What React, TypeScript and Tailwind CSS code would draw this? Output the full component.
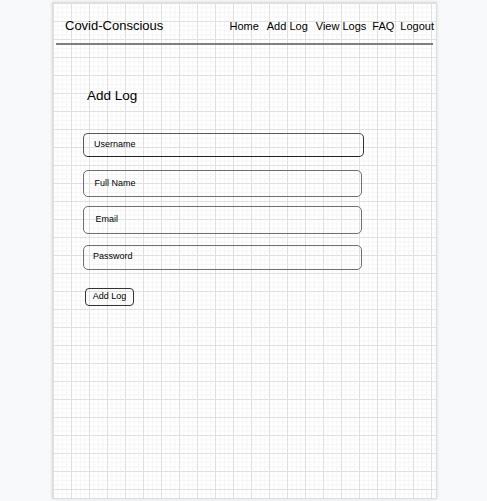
const fields = [
  { label: "Username", box: "mt-[29px] w-[281px] h-[24px] pl-[10px] border border-[#5a5a5a] border-b-[#222] border-r-[#333]" },
  { label: "Full Name", box: "mt-[13px] w-[279px] h-[27px] pl-[10.5px] border-[1.5px] border-[#707070]" },
  { label: "Email", box: "mt-[9px] w-[279px] h-[27.5px] pl-[11.5px] border-[1.5px] border-[#707070]" },
  { label: "Password", box: "mt-[11px] w-[279px] h-[25px] pl-[9px] border-[1.5px] border-[#707070]" },
];

const links = [
  { label: "Home", gap: "" },
  { label: "Add Log", gap: "ml-[8px]" },
  { label: "View Logs", gap: "ml-[8px]" },
  { label: "FAQ", gap: "ml-[6px]" },
  { label: "Logout", gap: "ml-[6px]" },
];

export default function App() {
  return (
    <div className="min-h-screen bg-[#f8f9fa] pl-[52px] pt-[2px] font-['Liberation_Sans',Arial,sans-serif] text-black">
      <div className="w-[385px] h-[497px] border border-[#dedede] bg-white shadow-[0_0_3px_rgba(0,0,0,0.12)] [background-image:linear-gradient(to_right,#e0e0e0_1px,transparent_1px),linear-gradient(to_bottom,#e0e0e0_1px,transparent_1px),linear-gradient(to_right,#f5f5f5_1px,transparent_1px),linear-gradient(to_bottom,#f5f5f5_1px,transparent_1px)] [background-size:18px_18px,18px_18px,4.5px_4.5px,4.5px_4.5px]">
        {/* Header */}
        <header className="flex items-baseline h-[40px] pt-[14.5px] pl-[12px] pr-[2px]">
          <span className="text-[13px] leading-[16px]">Covid-Conscious</span>
          <nav className="ml-auto flex items-baseline text-[11px] leading-[16px]">
            {links.map((l) => (
              <a key={l.label} className={l.gap}>
                {l.label}
              </a>
            ))}
          </nav>
        </header>
        <div className="mx-[3px] h-[2px] bg-[#7f7f7f]" />

        {/* Form */}
        <h1 className="mt-[43px] ml-[34px] text-[13.5px] leading-[16px]">Add Log</h1>
        <div className="flex flex-col ml-[30px]">
          {fields.map((f) => (
            <div key={f.label} className={"flex items-center rounded-[5px] text-[9px] " + f.box}>
              {f.label}
            </div>
          ))}
          <button className="mt-[18px] ml-[2px] w-[49px] h-[18px] flex items-center justify-center rounded-[4px] border border-[#333] text-[9px]">
            Add Log
          </button>
        </div>
      </div>
    </div>
  );
}
